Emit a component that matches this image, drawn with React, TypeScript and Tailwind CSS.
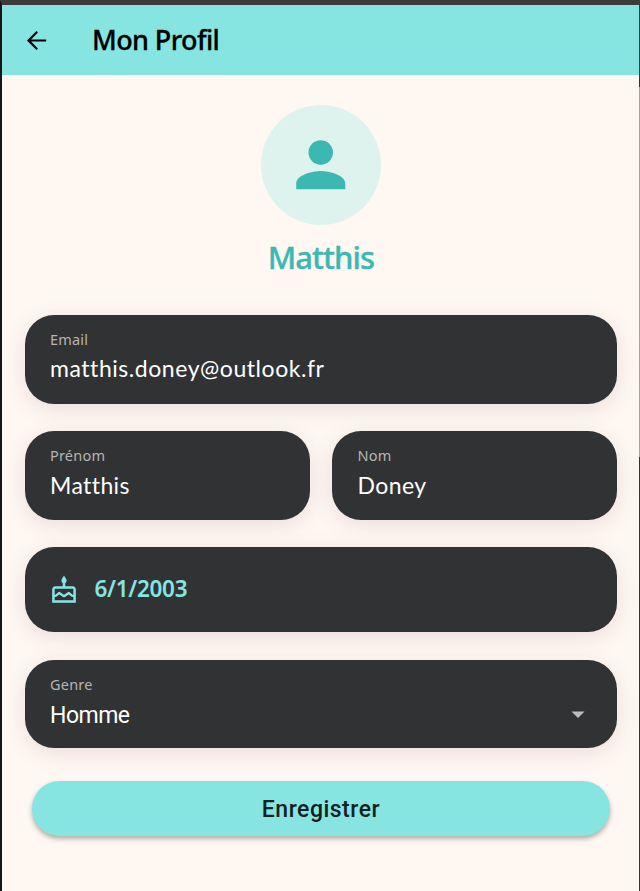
import type { ReactNode } from 'react';

const lato = "font-['Lato','Noto_Sans',sans-serif]";
const noto = "font-['Noto_Sans',sans-serif]";
const cardStyle = 'rounded-[29px] bg-[#313234] shadow-[0_5px_22px_rgba(90,40,80,0.13)] pl-[25.5px]';

function Field({ label, children, className }: { label: string; children: ReactNode; className: string }) {
  return (
    <div className={`${cardStyle} ${className} h-[88.5px] pt-[14px]`}>
      <div className={`${noto} text-[14.5px] leading-[20px] tracking-[0.2px] text-[#b5b5b6]`}>{label}</div>
      {children}
    </div>
  );
}

function ArrowIcon() {
  return (
    <svg viewBox="0 0 24 24" className="size-[29px] fill-black">
      <path d="M20 11.1H7.5l5.7-5.7L12 4.1 4.1 12l7.9 7.9 1.2-1.3-5.7-5.7H20z" />
    </svg>
  );
}

function CakeIcon() {
  return (
    <svg viewBox="0 0 24 29" className="h-[29px] w-[24px]" fill="none" stroke="#86e5e1" strokeWidth="2.5">
      <path d="M12 .5c-1.2 2-2.6 3.4-2.6 5a2.6 2.6 0 0 0 5.2 0C14.6 3.9 13.2 2.5 12 .5z" fill="#86e5e1" stroke="none" />
      <path d="M12 7v5" />
      <path d="M3.2 12.5h17.6a1.8 1.8 0 0 1 1.8 1.8v12.3H1.4V14.3a1.8 1.8 0 0 1 1.8-1.8z" />
      <path d="M1.5 21l2.5-.3 3.3-2.7 4.7 3.2 4.7-3.2 3.3 2.7 2.5.3" strokeWidth="2.3" strokeLinejoin="round" />
    </svg>
  );
}

export default function App() {
  return (
    <div className="flex h-[891px] w-[640px] overflow-hidden border-t-[5px] border-l-2 border-t-[#3c3c3c] border-l-[#15151a] bg-[#fff8f2]">
      <div className="w-[637px] overflow-hidden">
        <header className="flex h-[70px] items-center bg-[#86e5e1] pl-[20px]">
          <ArrowIcon />
          <h1 className={`${noto} -mt-px ml-[41px] text-[27px] leading-[40px] font-medium tracking-[-0.6px] text-black [-webkit-text-stroke:0.3px_#000]`}>Mon Profil</h1>
        </header>
        <main className="pl-[22.5px]">
          <section className="flex w-[593px] flex-col items-center pt-[30px]">
            <div className="flex size-[120px] justify-center rounded-full bg-[#def3ed] pt-[23px]">
              <svg viewBox="0 0 24 24" className="size-[73.5px] fill-[#3cb8b3]">
                <path d="M12 12c2.21 0 4-1.79 4-4s-1.79-4-4-4-4 1.79-4 4 1.79 4 4 4zm0 2c-2.67 0-8 1.34-8 4v2h16v-2c0-2.66-5.33-4-8-4z" />
              </svg>
            </div>
            <h2 className={`${noto} mt-[12px] h-[41px] text-[31px] leading-[40px] font-medium tracking-[-0.9px] text-[#3cb8b3] [-webkit-text-stroke:0.4px_#3cb8b3]`}>Matthis</h2>
          </section>
          <form className="flex w-[592.5px] flex-col pt-[37px]">
            <Field label="Email" className="w-full">
              <div className={`${lato} mt-[3px] text-[23px] leading-[32px] tracking-[0.55px] text-white`}>matthis.doney@outlook.fr</div>
            </Field>
            <div className="mt-[27.5px] flex gap-[22.5px]">
              <Field label="Prénom" className="w-[285px]">
                <div className={`${lato} mt-[4px] text-[23px] leading-[32px] tracking-[0.4px] text-white`}>Matthis</div>
              </Field>
              <Field label="Nom" className="w-[285px]">
                <div className={`${lato} mt-[4px] text-[23px] leading-[32px] tracking-[0.4px] text-white`}>Doney</div>
              </Field>
            </div>
            <div className={`${cardStyle} mt-[27.4px] flex h-[85px] items-center`}>
              <div className="mt-px ml-[2.3px]"><CakeIcon /></div>
              <span className={`${noto} ml-[18.2px] -mt-[2px] text-[22.5px] font-semibold tracking-[-0.3px] text-[#86e5e1]`}>6/1/2003</span>
            </div>
            <Field label="Genre" className="mt-[28.1px] w-full">
              <div className="mt-[6px] flex items-center justify-between pr-[32.5px] font-['Roboto',sans-serif] text-[23px] leading-[32px] tracking-[-0.5px] text-white">
                <span>Homme</span>
                <svg viewBox="0 0 14 8" className="-mt-[2px] h-[8px] w-[14px] fill-[#bdbdbe]"><path d="M.5.5h13L7 7z" /></svg>
              </div>
            </Field>
            <button type="button" className="mt-[32.5px] ml-[7.5px] h-[55px] w-[578px] rounded-[28px] bg-[#86e5e1] pt-[4px] font-['Roboto',sans-serif] text-[23px] font-medium tracking-[0.5px] text-[#14211f] shadow-[0_3px_5px_rgba(0,0,0,0.3)]">
              Enregistrer
            </button>
          </form>
        </main>
      </div>
      <div className="flex w-px flex-col">
        <div className="h-[82px] bg-[#333538]" />
        <div className="h-[370px] bg-[#a5a4a3]" />
        <div className="flex-1 bg-[#333538]" />
      </div>
    </div>
  );
}
